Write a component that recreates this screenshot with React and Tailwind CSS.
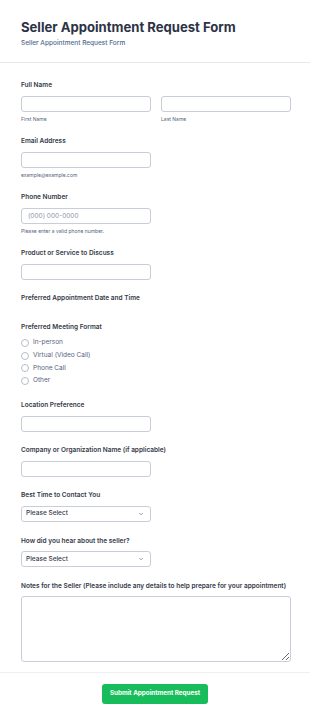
import { ChevronDown } from 'lucide-react';

const font = { fontFamily: 'Inter, "Noto Sans", sans-serif' };

function Label({ children }) {
  return <div className="text-[6.5px] leading-[9px] font-semibold text-[#343a48]">{children}</div>;
}

function Helper({ children }) {
  return <div className="mt-[4.5px] text-[5px] leading-[7px] text-[#57647e]">{children}</div>;
}

function TextInput({ placeholder, className = 'w-[130px]' }) {
  return (
    <input
      type="text"
      placeholder={placeholder}
      className={`${className} block h-[16px] mt-[5.5px] rounded-[3px] border border-[#c8cdd9] bg-white px-[6px] text-[6.5px] text-[#2c3345] placeholder-[#8894ab] outline-none`}
    />
  );
}

function Select() {
  return (
    <div className="mt-[5.5px] flex h-[16px] w-[130px] items-center justify-between rounded-[3px] border border-[#c8cdd9] bg-white px-[4px]">
      <span className="text-[6.5px] font-medium text-[#343a48]">Please Select</span>
      <ChevronDown size={6} strokeWidth={2.5} className="mr-[2px] text-[#57647e]" />
    </div>
  );
}

export default function App() {
  const formats = ['In-person', 'Virtual (Video Call)', 'Phone Call', 'Other'];

  return (
    <div className="min-h-[722px] w-[310px] bg-white" style={font}>
      {/* Header */}
      <div className="border-b border-[#e6e8ee] px-[21px] pt-[18px] pb-[14px]">
        <h1 className="text-[13.1px] leading-[18px] font-bold text-[#2c3345]">Seller Appointment Request Form</h1>
        <p className="mt-[3px] text-[6.5px] leading-[9px] font-medium text-[#4f6a8e]">Seller Appointment Request Form</p>
      </div>

      {/* Fields */}
      <div className="px-[21px] pt-[18px] pb-[10px]">
        <div className="mb-[14px]">
          <Label>Full Name</Label>
          <div className="flex gap-[10px]">
            <div>
              <TextInput />
              <Helper>First Name</Helper>
            </div>
            <div>
              <TextInput />
              <Helper>Last Name</Helper>
            </div>
          </div>
        </div>

        <div className="mb-[14px]">
          <Label>Email Address</Label>
          <TextInput />
          <Helper>example@example.com</Helper>
        </div>

        <div className="mb-[14px]">
          <Label>Phone Number</Label>
          <TextInput placeholder="(000) 000-0000" />
          <Helper>Please enter a valid phone number.</Helper>
        </div>

        <div className="mb-[14.5px]">
          <Label>Product or Service to Discuss</Label>
          <TextInput />
        </div>

        <div className="mb-[20px]">
          <Label>Preferred Appointment Date and Time</Label>
        </div>

        <div className="mb-[14px]">
          <Label>Preferred Meeting Format</Label>
          <div className="mt-[5px]">
            {formats.map((f) => (
              <label key={f} className="flex h-[12.6px] items-center gap-[4px]">
                <span className="h-[8px] w-[8px] rounded-full border border-[#b8bdc9] bg-white" />
                <span className="text-[6.5px] text-[#57647e]">{f}</span>
              </label>
            ))}
          </div>
        </div>

        <div className="mb-[14.5px]">
          <Label>Location Preference</Label>
          <TextInput />
        </div>

        <div className="mb-[14.5px]">
          <Label>Company or Organization Name (if applicable)</Label>
          <TextInput />
        </div>

        <div className="mb-[15px]">
          <Label>Best Time to Contact You</Label>
          <Select />
        </div>

        <div className="mb-[14.5px]">
          <Label>How did you hear about the seller?</Label>
          <Select />
        </div>

        <div>
          <Label>Notes for the Seller (Please include any details to help prepare for your appointment)</Label>
          <textarea className="mt-[5px] block h-[66px] w-[270px] rounded-[3px] border border-[#c8cdd9] bg-white outline-none" />
        </div>
      </div>

      {/* Footer */}
      <div className="flex justify-center border-t border-[#eef0f4] pt-[11px] pb-[17px]">
        <button className="h-[20px] rounded-[3px] bg-[#18bd5b] px-[8px] text-[6.3px] font-bold text-white">
          Submit Appointment Request
        </button>
      </div>
    </div>
  );
}
